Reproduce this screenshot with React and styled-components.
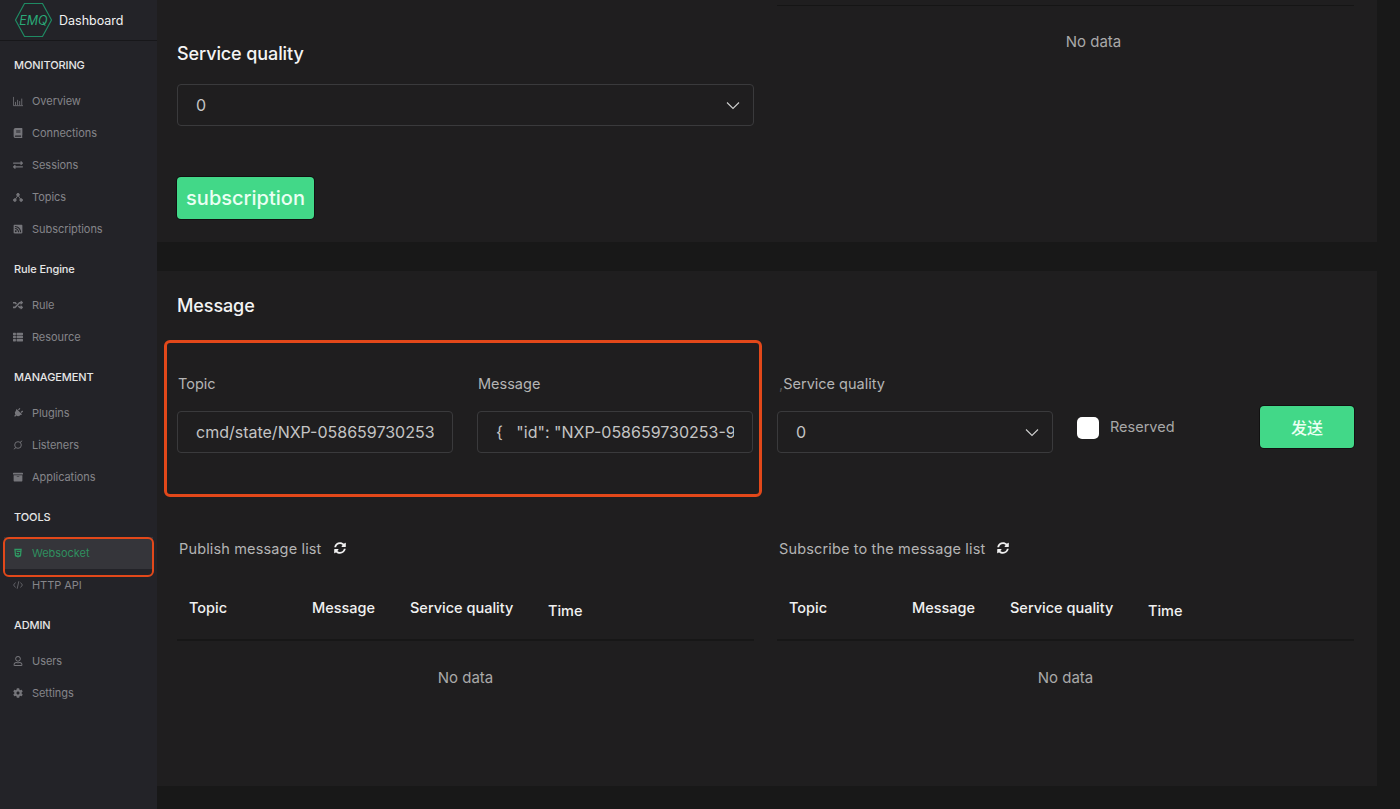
import React from "react";
import styled, { createGlobalStyle } from "styled-components";
import { FaBook, FaExchangeAlt, FaRssSquare, FaRandom, FaThList, FaPlug, FaArchive, FaHtml5, FaRegUser, FaCog, FaSyncAlt } from "react-icons/fa";

const Global = createGlobalStyle`
  html, body { margin: 0; padding: 0; height: 100%; background: #181818; }
  body { font-family: Inter, "Noto Sans CJK SC", sans-serif; overflow: hidden; }
  * { box-sizing: border-box; }
`;

const Page = styled.div`
  display: flex;
  width: 1400px;
  height: 809px;
  overflow: hidden;
  background: #181818;
`;

const Sidebar = styled.aside`
  width: 157px;
  flex: none;
  background: #232328;
  display: flex;
  flex-direction: column;
`;

const Brand = styled.div`
  height: 41px;
  display: flex;
  align-items: center;
  gap: 6px;
  padding-left: 14px;
  border-bottom: 1px solid #17171a;
  color: #f2f2f2;
  font-size: 12.5px;
`;

const Group = styled.section`
  margin-top: 4px;
`;

const GroupTitle = styled.div`
  height: 40px;
  display: flex;
  align-items: center;
  padding-left: 14px;
  color: #e6e6e6;
  font-size: 11px;
  font-weight: 500;
  letter-spacing: -0.1px;
`;

const NavItem = styled.div`
  position: relative;
  height: 32px;
  display: flex;
  align-items: center;
  gap: 9px;
  padding-left: ${p => (p.$active ? "9px" : "13px")};
  margin: ${p => (p.$active ? "0 4px" : "0")};
  background: ${p => (p.$active ? "#35353a" : "transparent")};
  color: ${p => (p.$active ? "#2f8f5f" : "#85858a")};
  font-size: 11px;
  letter-spacing: -0.05px;
`;

const NavIcon = styled.span`
  width: 10px;
  height: 12px;
  flex: none;
  display: flex;
  align-items: center;
  justify-content: center;
  color: ${p => (p.$active ? "#2f9a63" : "#75757a")};
  font-size: 10px;
`;

const Marker = styled.div`
  position: absolute;
  left: ${p => p.$left}px;
  top: ${p => p.$top}px;
  width: ${p => p.$width}px;
  height: ${p => p.$height}px;
  border: ${p => p.$stroke}px solid #e2481a;
  border-radius: 6px;
  pointer-events: none;
`;

const Main = styled.main`
  flex: 1;
  min-width: 0;
  display: flex;
  flex-direction: column;
  gap: 29px;
  padding-right: 23px;
  padding-bottom: 23px;
`;

const Card = styled.section`
  background: #1f1e1f;
  padding: 0 23px 23px 20px;
  ${p => p.$grow && "flex: 1;"}
  ${p => p.$grow && "padding-top: 21px;"}
`;

const TopGrid = styled.div`
  display: grid;
  grid-template-columns: 577px 577px;
  gap: 23px;
`;

const Title = styled.h2`
  margin: ${p => (p.$top ? "40px 0 16px" : "0")};
  height: 28px;
  line-height: 28px;
  color: #f4f4f4;
  font-size: 18px;
  font-weight: 500;
  letter-spacing: -0.1px;
`;

const Box = styled.div`
  height: 42px;
  width: ${p => p.$width || "100%"};
  display: flex;
  align-items: center;
  justify-content: space-between;
  padding: 0 18px;
  border: 1px solid #3a3a3c;
  border-radius: 4px;
  color: #c4c4c4;
  font-size: 16px;
`;

const Clip = styled.span`
  overflow: hidden;
  white-space: pre;
`;

const Chevron = () => (
  <svg width="14" height="9" viewBox="0 0 14 9" fill="none" stroke="#cfcfcf" strokeWidth="1.1" style={{ marginRight: -5 }}>
    <path d="M1 1.5 L7 7.5 L13 1.5" />
  </svg>
);

const GreenButton = styled.button`
  height: 42px;
  width: ${p => p.$width}px;
  flex: none;
  border: 0;
  border-radius: 4px;
  background: #42d888;
  box-shadow: 0 0 0 1px #111;
  color: #eafff3;
  font-family: Inter, "Noto Sans CJK SC", sans-serif;
  font-size: ${p => p.$size}px;
  font-weight: 500;
  padding: 0;
`;

const SubscribeButton = styled(GreenButton)`
  display: block;
  margin-top: 51px;
`;

const RightTop = styled.div`
  padding-top: 5px;
`;

const HairLine = styled.div`
  height: 1px;
  background: #151515;
`;

const NoData = styled.div`
  color: #a9a9a9;
  font-size: 15px;
  text-align: center;
  height: ${p => p.$height}px;
  line-height: 1;
  padding-top: ${p => p.$top}px;
  padding-left: ${p => p.$shift || 0}px;
`;

const FormRow = styled.div`
  position: relative;
  margin-top: 54px;
  display: grid;
  grid-template-columns: 276px 276px 276px 1fr 94px;
  column-gap: 24px;
`;

const Field = styled.div`
  min-width: 0;
`;

const Label = styled.div`
  height: 20px;
  line-height: 20px;
  margin: 0 0 17px 1px;
  color: #b4b4b4;
  font-size: 14.5px;
`;

const FaintComma = styled.span`
  color: #555;
  margin-left: 1px;
`;

const ReserveCell = styled.div`
  display: flex;
  align-items: flex-start;
  gap: 11px;
  padding-top: 43px;
  color: #a8a8a8;
  font-size: 14.5px;
  line-height: 20px;
`;

const Check = styled.span`
  width: 22px;
  height: 22px;
  flex: none;
  background: #fff;
  border-radius: 5px;
  margin-right: 0;
`;

const SendCell = styled.div`
  padding-top: 32px;
`;

const Lists = styled.div`
  margin-top: 85px;
  display: grid;
  grid-template-columns: 577px 577px;
  column-gap: 23px;
`;

const ListHead = styled.div`
  height: 20px;
  display: flex;
  align-items: center;
  gap: 12px;
  padding-left: 2px;
  color: #b4b4b4;
  font-size: 14.5px;
  letter-spacing: 0.15px;
  white-space: nowrap;
`;

const TableHead = styled.div`
  margin-top: 17px;
  height: 66px;
  display: grid;
  grid-template-columns: 123px 98px 138px 1fr;
  align-items: center;
  padding-left: 12px;
  border-bottom: 2px solid #171717;
`;

const Th = styled.div`
  color: #f1f1f1;
  font-size: 14.5px;
  font-weight: 500;
  white-space: nowrap;
  ${p => p.$low && "padding-top: 6px;"}
`;

const Overview = () => (
  <svg width="12" height="11" viewBox="0 0 12 11" fill="none" stroke="currentColor" strokeWidth="1">
    <path d="M.5 0V10.5H12M3 10V6M5.5 10V3.5M8 10V5M10.5 10V2" />
  </svg>
);
const Topics = () => (
  <svg width="12" height="11" viewBox="0 0 12 11" fill="none" stroke="currentColor" strokeWidth="1.1">
    <path d="M6 3 L2.5 8 M6 3 L9.5 8" />
    <circle cx="6" cy="2.2" r="1.6" fill="currentColor" />
    <circle cx="2.2" cy="8.6" r="1.6" fill="currentColor" />
    <circle cx="9.8" cy="8.6" r="1.6" fill="currentColor" />
  </svg>
);
const Listeners = () => (
  <svg width="12" height="12" viewBox="0 0 12 12" fill="none" stroke="currentColor" strokeWidth="1.1">
    <circle cx="6" cy="6" r="4" />
    <path d="M8.5 2.8 L11 1 M3.5 9.2 L1 11" />
  </svg>
);
const Code = () => (
  <svg width="12" height="10" viewBox="0 0 12 10" fill="none" stroke="currentColor" strokeWidth="0.9">
    <path d="M3 2 L.7 5 L3 8M9 2 L11.3 5 L9 8M7 .5 L5 9.5" />
  </svg>
);
const Logo = () => (
  <svg width="39" height="36" viewBox="0 0 39 36">
    <path d="M1.5 18 L10.5 1.5 H28.5 L37.5 18 L28.5 34.5 H10.5 Z" fill="none" stroke="#1f8a63" strokeWidth="1.2" />
    <text x="19.5" y="23" textAnchor="middle" fontFamily="Inter, sans-serif" fontSize="12.5" fontStyle="italic" fill="#2aa877">EMQ</text>
  </svg>
);

const nav = [
  ["MONITORING", [["Overview", <Overview />], ["Connections", <FaBook />], ["Sessions", <FaExchangeAlt />], ["Topics", <Topics />], ["Subscriptions", <FaRssSquare />]]],
  ["Rule Engine", [["Rule", <FaRandom />], ["Resource", <FaThList />]]],
  ["MANAGEMENT", [["Plugins", <FaPlug style={{ transform: "rotate(45deg)" }} />], ["Listeners", <Listeners />], ["Applications", <FaArchive />]]],
  ["TOOLS", [["Websocket", <FaHtml5 />, true], ["HTTP API", <Code />]]],
  ["ADMIN", [["Users", <FaRegUser />], ["Settings", <FaCog />]]],
];

const MessageTable = ({ title }) => (
  <div>
    <ListHead>{title}<FaSyncAlt size={12} color="#f0f0f0" /></ListHead>
    <TableHead>
      <Th>Topic</Th>
      <Th>Message</Th>
      <Th>Service quality</Th>
      <Th $low>Time</Th>
    </TableHead>
    <NoData $height={74} $top={29}>No data</NoData>
  </div>
);

export default function App() {
  return (
    <Page>
      <Global />
      <Sidebar>
        <Brand><Logo />Dashboard</Brand>
        {nav.map(([group, items]) => (
          <Group key={group}>
            <GroupTitle>{group}</GroupTitle>
            {items.map(([label, icon, active]) => (
              <NavItem key={label} $active={active}>
                <NavIcon $active={active}>{icon}</NavIcon>
                {label}
                {active && <Marker $left={-1} $top={0} $width={151} $height={40} $stroke={2} />}
              </NavItem>
            ))}
          </Group>
        ))}
      </Sidebar>
      <Main>
        <Card>
          <TopGrid>
            <div>
              <Title $top>Service quality</Title>
              <Box>0<Chevron /></Box>
              <SubscribeButton $width={137} $size={20}>subscription</SubscribeButton>
            </div>
            <RightTop>
              <HairLine />
              <NoData $height={60} $top={28} $shift={56}>No data</NoData>
            </RightTop>
          </TopGrid>
        </Card>
        <Card $grow>
          <Title>Message</Title>
          <FormRow>
            <Marker $left={-13} $top={-34} $width={598} $height={157} $stroke={3} />
            <Field>
              <Label>Topic</Label>
              <Box><Clip>cmd/state/NXP-058659730253-9a1f</Clip></Box>
            </Field>
            <Field>
              <Label>Message</Label>
              <Box><Clip>{'{   "id": "NXP-058659730253-9a1f"'}</Clip></Box>
            </Field>
            <Field>
              <Label><FaintComma>,</FaintComma>Service quality</Label>
              <Box>0<Chevron /></Box>
            </Field>
            <ReserveCell><Check />Reserved</ReserveCell>
            <SendCell><GreenButton $width={94} $size={16}>发送</GreenButton></SendCell>
          </FormRow>
          <Lists>
            <MessageTable title="Publish message list" />
            <MessageTable title="Subscribe to the message list" />
          </Lists>
        </Card>
      </Main>
    </Page>
  );
}
